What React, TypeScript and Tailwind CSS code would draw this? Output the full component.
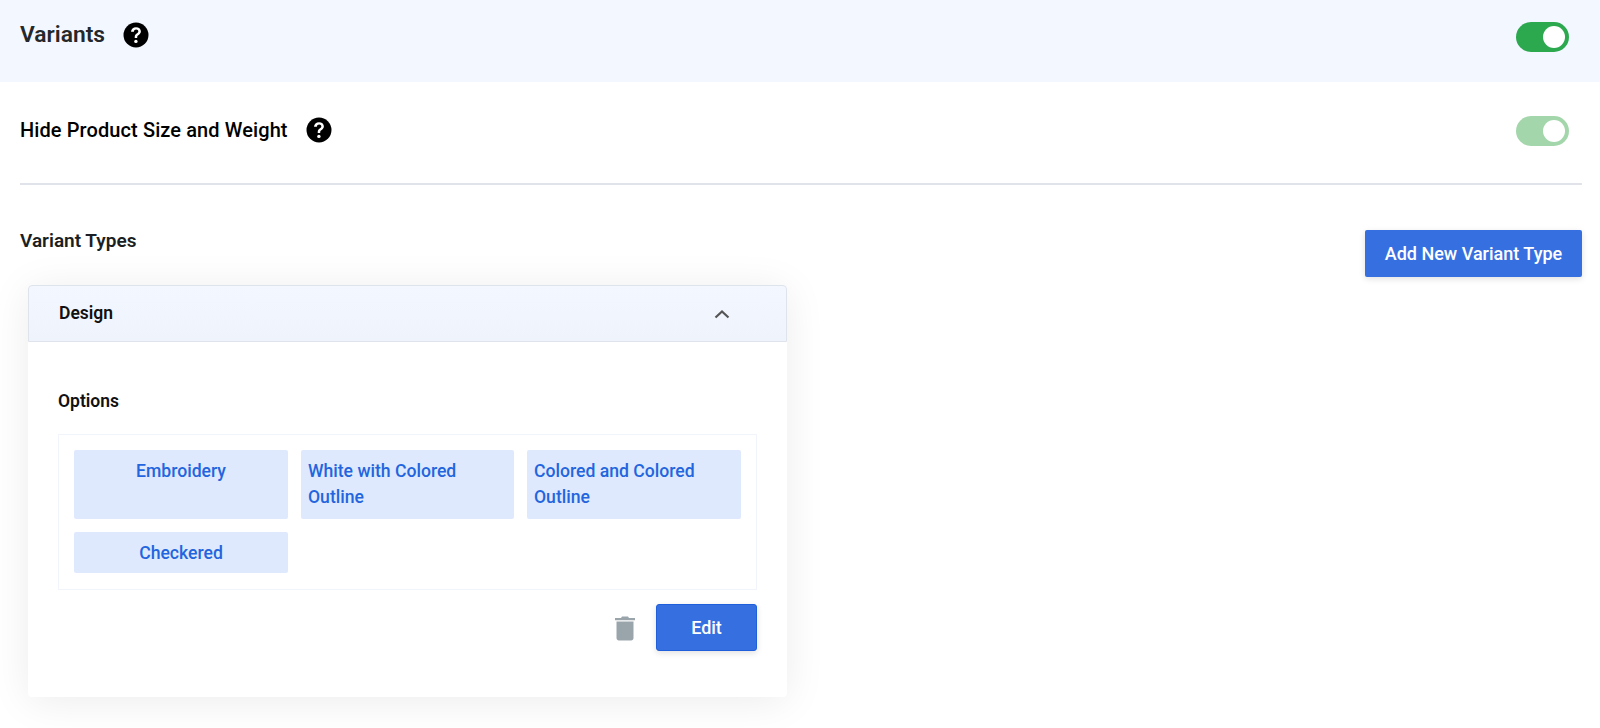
const HelpIcon = () => {
  return (
    <svg width="26" height="26" viewBox="0 0 26 26" className="shrink-0">
      <circle cx="13" cy="13" r="12.500" fill="#000" />
      <path
        d="M8 9.800c.1-2.900 2.200-4.600 5-4.600 2.800 0 4.900 1.600 4.900 4.100 0 1.700-.9 2.700-2.200 3.600-1.200.8-1.500 1.300-1.500 2.500v.5h-2.500v-.7c0-1.800.6-2.700 2-3.700 1.100-.8 1.600-1.300 1.600-2.100 0-1.100-.9-1.800-2.100-1.800-1.400 0-2.200.8-2.300 2.200z"
        fill="#fff"
      />
      <circle cx="12.900" cy="19.400" r="1.700" fill="#fff" />
    </svg>
  );
};

const Toggle = ({ faded }: { faded?: boolean }) => {
  return (
    <div
      className={`flex items-center justify-end w-[53px] h-[30px] rounded-full pr-[4px] ${
        faded ? "bg-[#a3d6ab]" : "bg-[#2ca84f]"
      }`}
    >
      <div className="w-[22px] h-[22px] rounded-full bg-white" />
    </div>
  );
};

const Chip = ({ label, left }: { label: string; left?: boolean }) => {
  return (
    <div
      className={`bg-[#dfe9fd] rounded-[2px] px-[7px] pt-[8px] text-[17.6px] leading-[26px] font-medium text-[#2265de] ${
        left ? "text-left" : "text-center"
      }`}
    >
      {label}
    </div>
  );
};

const TrashIcon = () => {
  return (
    <svg width="20" height="26" viewBox="0 0 20 26">
      <path d="M7 1.500h6l1 1.500h6v2.200H0V3h6z" fill="#9aa5ab" />
      <path
        d="M1.500 6.500h17v16.500c0 1.400-1 2.400-2.400 2.400H3.900c-1.400 0-2.400-1-2.400-2.400z"
        fill="#9aa5ab"
      />
    </svg>
  );
};

export default function App() {
  return (
    <div
      className="min-h-[728px] bg-white text-[#1b1f23] overflow-hidden"
      style={{ fontFamily: "Roboto, sans-serif" }}
    >
      <div className="h-[82px] bg-[#f3f7ff] pl-5 pr-[31px] pt-[22px] flex justify-between items-start">
        <div className="flex items-center gap-[18px] h-[26px]">
          <span className="text-[22.8px] leading-[26px] font-semibold text-[#25282b]">
            Variants
          </span>
          <HelpIcon />
        </div>
        <Toggle />
      </div>

      <div className="ml-5 mr-[18px] h-[103px] pt-[34px] border-b-2 border-[#e0e3ea]">
        <div className="flex justify-between items-start pr-[13px]">
          <div className="flex items-center gap-[18px] h-[30px] -mt-[1px]">
            <span className="text-[20px] tracking-[0.1px] font-medium text-black">
              Hide Product Size and Weight
            </span>
            <HelpIcon />
          </div>
          <Toggle faded />
        </div>
      </div>

      <div className="flex justify-between items-start pl-5 pr-[18px] pt-[45px]">
        <span className="text-[19px] leading-[22px] font-semibold text-[#1b1f23]">
          Variant Types
        </span>
        <button className="w-[217px] h-[47px] bg-[#366fe0] rounded-[2px] text-white text-[18px] font-medium shadow-[0_2px_6px_rgba(0,0,0,0.12)]">
          Add New Variant Type
        </button>
      </div>

      <div className="ml-[28px] mt-[8px] w-[759px] h-[412px] bg-white rounded-[4px] shadow-[0_4px_40px_rgba(0,0,0,0.08)]">
        <div className="h-[57px] flex items-center justify-between pl-[30px] pr-[56px] bg-gradient-to-b from-[#f3f7ff] to-[#eff3fc] border border-[#dfe3ec] rounded-t-[4px]">
          <span className="text-[17.5px] font-semibold text-[#111]">Design</span>
          <svg width="16" height="10" viewBox="0 0 16 10" fill="none">
            <path d="M1.500 8.500L8 2.500l6.500 6" stroke="#555" strokeWidth="2.200" />
          </svg>
        </div>

        <div className="px-[30px] pt-[47px]">
          <div className="text-[17.5px] leading-[24px] font-semibold text-[#111]">
            Options
          </div>
          <div className="mt-[21px] border border-[#f1f4fa] px-[15px] pt-[15px] pb-[15px] h-[156px]">
            <div className="grid grid-cols-[214px_213px_214px] grid-rows-[69px_41px] gap-x-[13px] gap-y-[13px]">
              <Chip label="Embroidery" />
              <Chip label="White with Colored Outline" left />
              <Chip label="Colored and Colored Outline" left />
              <Chip label="Checkered" />
            </div>
          </div>
          <div className="flex justify-end items-center gap-[21px] mt-[14px]">
            <TrashIcon />
            <button className="w-[101px] h-[47px] bg-[#366fe0] border border-[#1f5fdc] rounded-[3px] text-white text-[18px] font-medium shadow-[0_2px_6px_rgba(0,0,0,0.12)]">
              Edit
            </button>
          </div>
        </div>
      </div>
    </div>
  );
}
